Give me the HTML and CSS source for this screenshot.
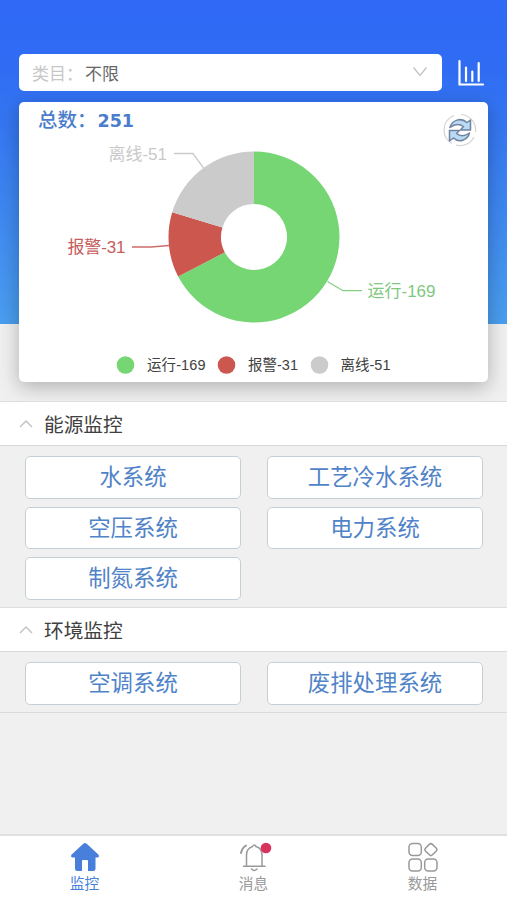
FILE: index.html
```html
<!DOCTYPE html>
<html lang="zh-CN">
<head>
<meta charset="utf-8">
<meta name="viewport" content="width=device-width, initial-scale=1">
<title>监控</title>
<link rel="stylesheet" href="styles.css">
</head>
<body>
<main class="page">
  <section class="hero">
    <div class="toolbar">
      <div class="select">
        <span class="select-label">类目：</span><span class="select-value">不限</span>
        <svg class="select-arrow" width="16" height="12" viewBox="0 0 16 12"><path d="M1.5 1.5 8 9.500 14.500 1.500"/></svg>
      </div>
      <svg class="stats" width="28" height="28" viewBox="0 0 28 28"><path d="M2.500 2V25.500H26M9 8.500V22M15.300 12.500V22M21.700 4V22"/></svg>
    </div>
    <div class="card">
      <h1 class="total">总数：<span class="total-number">251</span></h1>
      <svg class="chart" viewBox="20 102 468 280">
        <path fill="#75d673" d="M254 151.500A85.500 85.500 0 1 1 178.200 276.600L224.800 252.300A33 33 0 1 0 254 204Z"/>
        <path fill="#cb574e" d="M178.200 276.600A85.500 85.500 0 0 1 172.200 212.200L222.400 227.400A33 33 0 0 0 224.800 252.300Z"/>
        <path fill="#cbcbcb" d="M172.200 212.200A85.500 85.500 0 0 1 254 151.500V204A33 33 0 0 0 222.400 227.400Z"/>
        <g class="leader">
          <path stroke="#cbcbcb" d="M174 153.500H193L203.500 168"/>
          <path stroke="#cb6d69" d="M132 247H151L169 245.500"/>
          <path stroke="#83ce82" d="M327.500 281.500 343 290.700H362"/>
        </g>
        <g class="chart-label">
          <text x="108.500" y="160" fill="#c9c9c9" textLength="58.500">离线-51</text>
          <text x="67.500" y="253" fill="#c65b5b" textLength="58">报警-31</text>
          <text x="367.500" y="297" fill="#7fc87f" textLength="68">运行-169</text>
        </g>
        <circle cx="125.500" cy="365" r="8.800" fill="#75d673"/>
        <circle cx="226.500" cy="365" r="8.800" fill="#cb574e"/>
        <circle cx="319.500" cy="365" r="8.800" fill="#cbcbcb"/>
        <g class="legend-label">
          <text x="147" y="370" textLength="58.500">运行-169</text>
          <text x="248" y="370" textLength="50">报警-31</text>
          <text x="340.500" y="370" textLength="50">离线-51</text>
        </g>
      </svg>
      <svg class="refresh" width="34" height="34" viewBox="0 0 34 34">
        <path class="refresh-ring" d="M18 1.500A15.500 15.500 0 0 1 32.500 19M31 24A15.500 15.500 0 0 1 13 32M9 30.500A15.500 15.500 0 0 1 11 2.500"/>
        <path class="refresh-arrow" d="M7 14.500C9 7 18 4 24 9.500L27.500 7V17H17.500L20.500 13.500C16 10.500 11 11.500 7 14.500Z"/>
        <path class="refresh-arrow" d="M26.500 20C24.500 27.500 15.500 30 10.500 25L6.500 28V17.500H16.500L13.500 20.500C17.500 24 22 23 26.500 20Z"/>
      </svg>
    </div>
  </section>

  <section class="group">
    <h2 class="group-title"><svg width="14" height="9" viewBox="0 0 14 9"><path d="M1 8 7 2 13 8"/></svg>能源监控</h2>
    <div class="systems">
      <button>水系统</button>
      <button>工艺冷水系统</button>
      <button>空压系统</button>
      <button>电力系统</button>
      <button>制氮系统</button>
    </div>
  </section>
  <section class="group">
    <h2 class="group-title"><svg width="14" height="9" viewBox="0 0 14 9"><path d="M1 8 7 2 13 8"/></svg>环境监控</h2>
    <div class="systems">
      <button>空调系统</button>
      <button>废排处理系统</button>
    </div>
  </section>

  <nav class="tabs">
    <a class="tab active">
      <svg width="30" height="30" viewBox="0 0 30 30"><path fill="currentColor" d="M13.300 1.700Q15 .3 16.700 1.700L28.300 12.500Q30 14.800 27.500 15.500H25.500V26.500Q25.500 29 23 29H18V19Q18 18 17 18H13Q12 18 12 19V29H7.500Q5 29 5 26.500V15.500H2.500Q0 14.800 1.700 12.500Z"/></svg>
      <span>监控</span>
    </a>
    <a class="tab">
      <svg class="bell" width="32" height="30" viewBox="0 0 32 30"><g fill="none" stroke="currentColor" stroke-width="1.500" stroke-linecap="round"><path d="M5.500 24.300H27M8.500 24V13C8.500 8 11.500 5.500 14.500 4.500Q16.200 1.500 18 4.500C21.500 5.500 24 8 24 13V24M13.500 27Q16.200 30 19 27"/><path stroke-width="2" d="M3 11Q4 6 8 3.500"/></g><circle cx="28" cy="6" r="5.300" fill="#d9325f"/></svg>
      <span>消息</span>
    </a>
    <a class="tab">
      <svg width="30" height="30" viewBox="0 0 30 30"><g fill="none" stroke="currentColor" stroke-width="1.500"><rect x="1" y="1.500" width="12.300" height="12" rx="3.500"/><rect x="1" y="17" width="12.300" height="12" rx="3.500"/><rect x="16.700" y="17" width="12.300" height="12" rx="3.500"/><rect x="18.100" y="2.800" width="9.600" height="9.600" rx="2.200" transform="rotate(45 22.900 7.600)"/></g></svg>
      <span>数据</span>
    </a>
  </nav>
</main>
</body>
</html>
```
FILE: styles.css
```css
* { box-sizing: border-box; }

body {
  margin: 0;
  font-family: "Liberation Sans", "Noto Sans CJK SC", sans-serif;
  background: #f0f0f0;
}

.page {
  display: flex;
  flex-direction: column;
  height: 900px;
}

.hero {
  height: 401px;
  padding: 54px 19px 0 19px;
  background: linear-gradient(#2f69f6 0, #2f6cf3 70px, #4a9eef 324px) no-repeat 0 0 / 100% 324px;
  overflow: hidden;
}

.toolbar {
  display: flex;
  align-items: center;
  gap: 15px;
}

.select {
  display: flex;
  align-items: center;
  width: 423px;
  height: 37px;
  padding: 0 14px 1px 13px;
  border-radius: 5px;
  background: #fff;
  font-size: 17px;
}

.select-label { width: 53px; color: #c7c7c7; white-space: nowrap; }
.select-value { color: #666; }
.select-arrow { margin-left: auto; fill: none; stroke: #c4c4c4; stroke-width: 1.3; }
.stats { flex: none; fill: none; stroke: #fff; stroke-width: 2.2; stroke-linecap: round; }

.card {
  display: grid;
  grid-template: 280px / 469px;
  margin-top: 11px;
  border-radius: 5px;
  background: #fff;
  box-shadow: 0 5px 20px rgba(0, 0, 0, 0.27);
}

.card > * { grid-area: 1 / 1; }

.total {
  margin: 4px 0 0 19px;
  color: #4a7dcb;
  font-size: 19.500px;
  line-height: 28px;
  font-weight: 500;
}

.total-number {
  font-family: "DejaVu Sans", sans-serif;
  font-size: 17.500px;
  font-weight: 700;
  margin-left: 1px;
}

.chart { width: 468px; height: 280px; margin-left: 1px; }
.leader { fill: none; stroke-width: 1.3; }
.chart-label { font-size: 17px; }
.legend-label { font-size: 14.500px; fill: #404040; }

.refresh { justify-self: end; margin: 11px 11px 0 0; }
.refresh-ring { fill: none; stroke: #d3d3d3; stroke-width: 1.2; }
.refresh-arrow { fill: #b9d9f4; stroke: #71839e; stroke-width: 1.5; stroke-linejoin: round; }

.group-title {
  display: flex;
  align-items: center;
  gap: 11px;
  height: 45px;
  margin: 0;
  padding: 0 0 1px 19px;
  border-top: 1px solid #dedede;
  border-bottom: 1px solid #d8dada;
  background: #fff;
  color: #404040;
  font-size: 19.700px;
  font-weight: 400;
}

.group-title svg { fill: none; stroke: #c4c4c4; stroke-width: 1.5; }

.systems {
  display: grid;
  grid-template-columns: 216px 216px;
  grid-auto-rows: 42.500px;
  gap: 8px 26px;
  padding: 10px 25px 7.500px;
}

.group + .group .systems { border-bottom: 1px solid #dadcdc; }

.systems button {
  padding: 2px 0 0;
  border: 1px solid #c5d0d6;
  border-radius: 5px;
  background: #fff;
  color: #5083c8;
  font: inherit;
  font-size: 22.400px;
  line-height: 1;
}

.tabs {
  display: grid;
  grid-template-columns: repeat(3, 1fr);
  height: 66px;
  margin-top: auto;
  border-top: 2px solid #dfdfdf;
  background: #fff;
}

.tab {
  display: flex;
  flex-direction: column;
  align-items: center;
  padding-top: 6px;
  color: #999;
  font-size: 14.700px;
  line-height: 25px;
}

.tab.active { color: #477fdb; }
.bell { overflow: visible; }
```
